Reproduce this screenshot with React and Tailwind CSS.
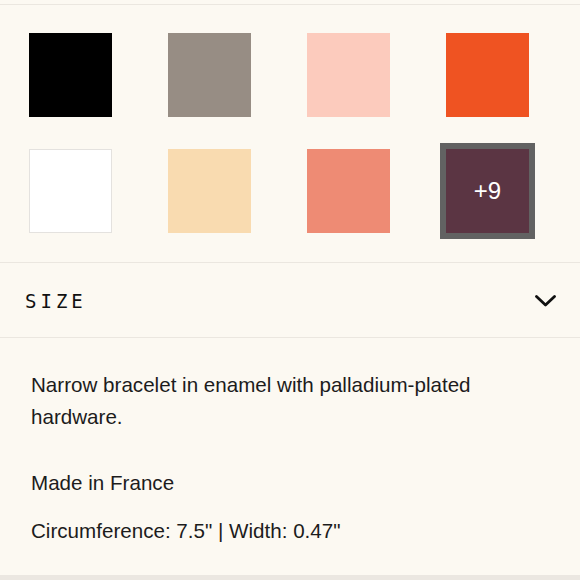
import React from "react";

export default function App() {
  const row1 = ["#000000", "#978d84", "#fccbbd", "#ef5322"];
  return (
    <div className="w-[580px] h-[580px] bg-[#fcf9f2] overflow-hidden flex flex-col" style={{ fontFamily: '"Liberation Sans", Arial, sans-serif' }}>
      <div className="h-[4px]" />
      <div className="border-t border-[#ebe7e0] pt-[28px] pb-[29px] pl-[29px] flex flex-col gap-[32px]">
        <div className="flex gap-[56px]">
          {row1.map((c) => (
            <div key={c} className="w-[83px] h-[84px]" style={{ backgroundColor: c }} />
          ))}
        </div>
        <div className="flex gap-[56px]">
          <div className="w-[83px] h-[84px] bg-white border border-[#e4e2df]" />
          <div className="w-[83px] h-[84px] bg-[#f9dbb0]" />
          <div className="w-[83px] h-[84px] bg-[#ee8b74]" />
          <div className="w-[83px] h-[84px] bg-[#5b3543] outline-[6px] outline-solid outline-[#626262] flex items-center justify-center text-white text-[24px]">
            +9
          </div>
        </div>
      </div>
      <div className="border-t border-b border-[#ebe7e0] h-[76px] flex items-center justify-between pl-[25px] pr-[24px]">
        <span className="text-[19px] tracking-[4px] text-[#111] pt-[2px]" style={{ fontFamily: '"DejaVu Sans Mono", monospace' }}>SIZE</span>
        <svg width="21" height="12" viewBox="0 0 21 12" className="mt-[2px]">
          <path d="M1.5 1.5 L10.5 10 L19.5 1.5" fill="none" stroke="#111" strokeWidth="2.8" strokeLinecap="round" strokeLinejoin="round" />
        </svg>
      </div>
      <div className="flex-1 pt-[31px] pl-[31px] pr-[70px] text-[20.6px] leading-[32px] text-[#1c1c1c]">
        <p className="mb-[34px]">Narrow bracelet in enamel with palladium-plated hardware.</p>
        <p className="mb-[16px]">Made in France</p>
        <p>Circumference: 7.5" | Width: 0.47"</p>
      </div>
      <div className="h-[5px] bg-[#ebe7e1]" />
    </div>
  );
}
